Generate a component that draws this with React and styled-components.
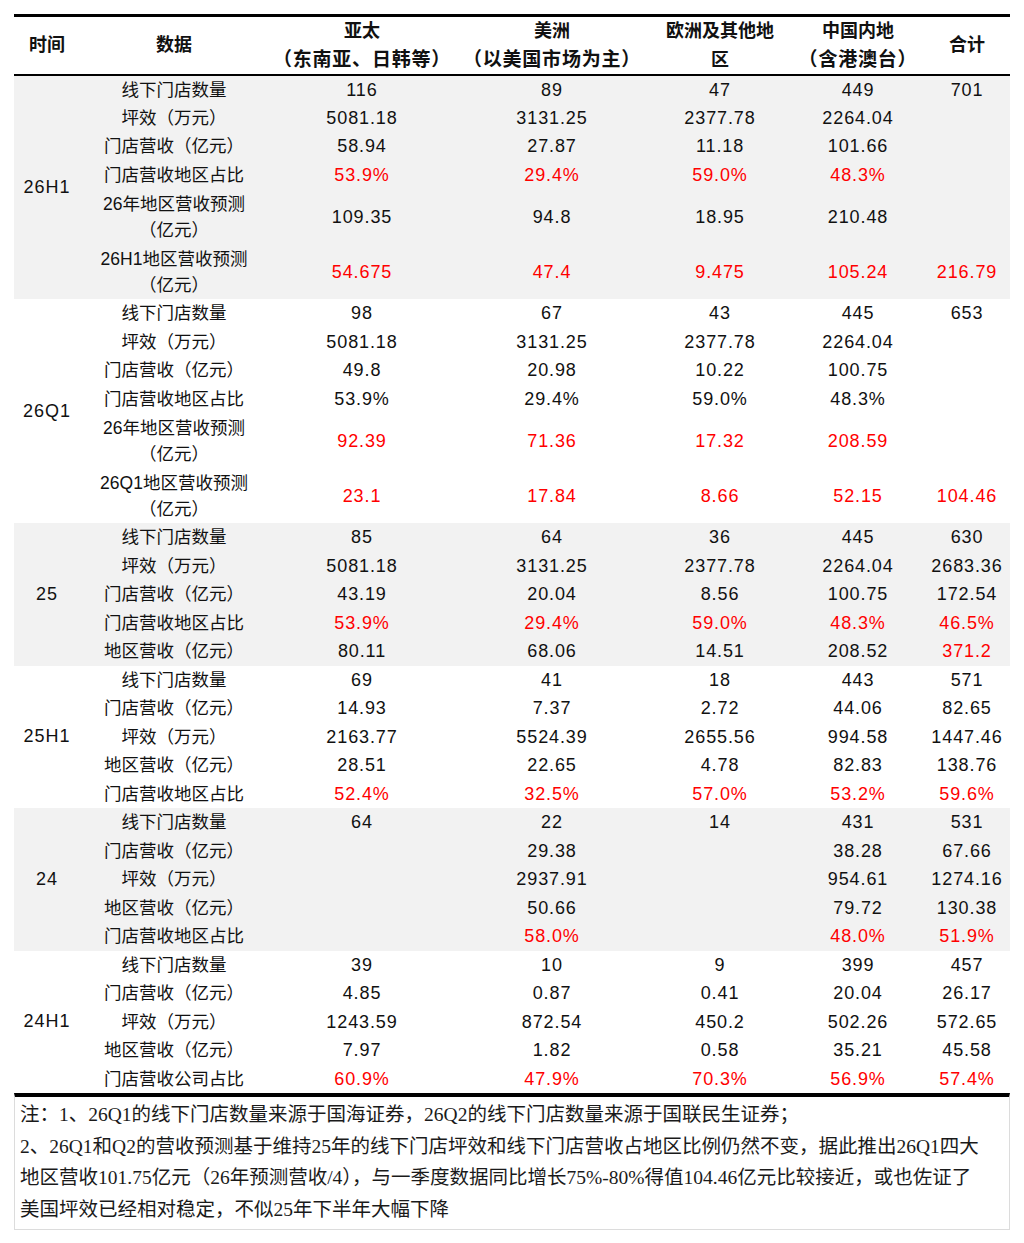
import React from 'react';
import styled, { createGlobalStyle } from 'styled-components';

const GlobalStyle = createGlobalStyle`
  html, body {
    margin: 0;
    padding: 0;
    background: #fff;
  }
`;

const COLUMNS = [
  { key: 'time', width: 66, head: ['时间'] },
  { key: 'label', width: 188, head: ['数据'] },
  { key: 'apac', width: 188, head: ['亚太', '（东南亚、日韩等）'] },
  { key: 'us', width: 192, head: ['美洲', '（以美国市场为主）'] },
  { key: 'eu', width: 144, head: ['欧洲及其他地', '区'] },
  { key: 'cn', width: 132, head: ['中国内地', '（含港澳台）'] },
  { key: 'total', width: 86, head: ['合计'] }
];

// red: true marks the whole row, an array marks only those value columns
const GROUPS = [
  {
    time: '26H1',
    shaded: true,
    rows: [
      { label: ['线下门店数量'], values: ['116', '89', '47', '449', '701'] },
      { label: ['坪效（万元）'], values: ['5081.18', '3131.25', '2377.78', '2264.04', ''] },
      { label: ['门店营收（亿元）'], values: ['58.94', '27.87', '11.18', '101.66', ''] },
      { label: ['门店营收地区占比'], values: ['53.9%', '29.4%', '59.0%', '48.3%', ''], red: true },
      { label: ['26年地区营收预测', '（亿元）'], values: ['109.35', '94.8', '18.95', '210.48', ''] },
      { label: ['26H1地区营收预测', '（亿元）'], values: ['54.675', '47.4', '9.475', '105.24', '216.79'], red: true }
    ]
  },
  {
    time: '26Q1',
    rows: [
      { label: ['线下门店数量'], values: ['98', '67', '43', '445', '653'] },
      { label: ['坪效（万元）'], values: ['5081.18', '3131.25', '2377.78', '2264.04', ''] },
      { label: ['门店营收（亿元）'], values: ['49.8', '20.98', '10.22', '100.75', ''] },
      { label: ['门店营收地区占比'], values: ['53.9%', '29.4%', '59.0%', '48.3%', ''] },
      { label: ['26年地区营收预测', '（亿元）'], values: ['92.39', '71.36', '17.32', '208.59', ''], red: true },
      { label: ['26Q1地区营收预测', '（亿元）'], values: ['23.1', '17.84', '8.66', '52.15', '104.46'], red: true }
    ]
  },
  {
    time: '25',
    shaded: true,
    rows: [
      { label: ['线下门店数量'], values: ['85', '64', '36', '445', '630'] },
      { label: ['坪效（万元）'], values: ['5081.18', '3131.25', '2377.78', '2264.04', '2683.36'] },
      { label: ['门店营收（亿元）'], values: ['43.19', '20.04', '8.56', '100.75', '172.54'] },
      { label: ['门店营收地区占比'], values: ['53.9%', '29.4%', '59.0%', '48.3%', '46.5%'], red: true },
      { label: ['地区营收（亿元）'], values: ['80.11', '68.06', '14.51', '208.52', '371.2'], red: [4] }
    ]
  },
  {
    time: '25H1',
    rows: [
      { label: ['线下门店数量'], values: ['69', '41', '18', '443', '571'] },
      { label: ['门店营收（亿元）'], values: ['14.93', '7.37', '2.72', '44.06', '82.65'] },
      { label: ['坪效（万元）'], values: ['2163.77', '5524.39', '2655.56', '994.58', '1447.46'] },
      { label: ['地区营收（亿元）'], values: ['28.51', '22.65', '4.78', '82.83', '138.76'] },
      { label: ['门店营收地区占比'], values: ['52.4%', '32.5%', '57.0%', '53.2%', '59.6%'], red: true }
    ]
  },
  {
    time: '24',
    shaded: true,
    rows: [
      { label: ['线下门店数量'], values: ['64', '22', '14', '431', '531'] },
      { label: ['门店营收（亿元）'], values: ['', '29.38', '', '38.28', '67.66'] },
      { label: ['坪效（万元）'], values: ['', '2937.91', '', '954.61', '1274.16'] },
      { label: ['地区营收（亿元）'], values: ['', '50.66', '', '79.72', '130.38'] },
      { label: ['门店营收地区占比'], values: ['', '58.0%', '', '48.0%', '51.9%'], red: true }
    ]
  },
  {
    time: '24H1',
    rows: [
      { label: ['线下门店数量'], values: ['39', '10', '9', '399', '457'] },
      { label: ['门店营收（亿元）'], values: ['4.85', '0.87', '0.41', '20.04', '26.17'] },
      { label: ['坪效（万元）'], values: ['1243.59', '872.54', '450.2', '502.26', '572.65'] },
      { label: ['地区营收（亿元）'], values: ['7.97', '1.82', '0.58', '35.21', '45.58'] },
      { label: ['门店营收公司占比'], values: ['60.9%', '47.9%', '70.3%', '56.9%', '57.4%'], red: true }
    ]
  }
];

const NOTES = [
  '注：1、26Q1的线下门店数量来源于国海证券，26Q2的线下门店数量来源于国联民生证券；',
  '2、26Q1和Q2的营收预测基于维持25年的线下门店坪效和线下门店营收占地区比例仍然不变，据此推出26Q1四大',
  '地区营收101.75亿元（26年预测营收/4），与一季度数据同比增长75%-80%得值104.46亿元比较接近，或也佐证了',
  '美国坪效已经相对稳定，不似25年下半年大幅下降'
];

const Page = styled.div`
  padding: 14px 14px 0 14px;
  width: 996px;
`;

const Table = styled.table`
  width: 996px;
  border-collapse: collapse;
  table-layout: fixed;
  font-family: "Liberation Sans", "Noto Sans CJK SC", sans-serif;
  color: #111;
  border-top: 3px solid #000;
`;

const HeadCell = styled.th`
  height: 57px;
  padding: 0;
  font-size: 18px;
  font-weight: 700;
  line-height: 28.5px;
  text-align: center;
  vertical-align: middle;
  border-bottom: 2px solid #000;
  white-space: nowrap;
`;

const HeadLine = styled.span`
  display: block;
  font-size: ${props => (props.$sub ? '19px' : '18px')};
  letter-spacing: ${props => (props.$sub ? '0.8px' : '0')};
`;

const Row = styled.tr`
  height: ${props => (props.$tall ? '55px' : '28.5px')};
  background: ${props => (props.$shaded ? '#f2f2f2' : '#fff')};
`;

const TimeCell = styled.td`
  padding: 0;
  font-size: 18px;
  letter-spacing: 1px;
  text-align: center;
  vertical-align: middle;
  background: ${props => (props.$shaded ? '#f2f2f2' : '#fff')};
`;

const LabelCell = styled.td`
  padding: 0;
  font-size: 17.5px;
  line-height: 26px;
  text-align: center;
  vertical-align: middle;
  white-space: nowrap;

  span {
    display: block;
  }
`;

const ValueCell = styled.td`
  padding: 0;
  font-size: 18px;
  letter-spacing: 0.9px;
  line-height: 26px;
  text-align: center;
  vertical-align: middle;
  color: ${props => (props.$red ? '#ff0000' : '#111')};
`;

const Notes = styled.div`
  box-sizing: border-box;
  width: 996px;
  border-top: 4px solid #000;
  border-left: 1.5px solid #dcdcdc;
  border-right: 1.5px solid #dcdcdc;
  border-bottom: 1.5px solid #dcdcdc;
  padding: 2px 4px 4px 5px;
  font-family: "Liberation Serif", "Noto Sans CJK SC", serif;
  font-size: 19.5px;
  line-height: 31.5px;
  color: #1a1a1a;
`;

const NoteLine = styled.div`
  white-space: nowrap;
`;

const isRed = (row, i) => row.red === true || (Array.isArray(row.red) && row.red.includes(i));

const Group = ({ group }) =>
  group.rows.map((row, r) => (
    <Row key={r} $shaded={group.shaded} $tall={row.label.length > 1}>
      {r === 0 ? (
        <TimeCell rowSpan={group.rows.length} $shaded={group.shaded}>
          {group.time}
        </TimeCell>
      ) : null}
      <LabelCell>
        {row.label.map(line => (
          <span key={line}>{line}</span>
        ))}
      </LabelCell>
      {row.values.map((v, i) => (
        <ValueCell key={i} $red={isRed(row, i)}>
          {v}
        </ValueCell>
      ))}
    </Row>
  ));

export default function App() {
  return (
    <Page>
      <GlobalStyle />
      <Table>
        <colgroup>
          {COLUMNS.map(col => (
            <col key={col.key} style={{ width: col.width }} />
          ))}
        </colgroup>
        <thead>
          <tr>
            {COLUMNS.map(col => (
              <HeadCell key={col.key}>
                {col.head.map((line, i) => (
                  <HeadLine key={i} $sub={i > 0 && line.startsWith('（')}>
                    {line}
                  </HeadLine>
                ))}
              </HeadCell>
            ))}
          </tr>
        </thead>
        <tbody>
          {GROUPS.map(group => (
            <Group key={group.time} group={group} />
          ))}
        </tbody>
      </Table>
      <Notes>
        {NOTES.map(line => (
          <NoteLine key={line}>{line}</NoteLine>
        ))}
      </Notes>
    </Page>
  );
}
